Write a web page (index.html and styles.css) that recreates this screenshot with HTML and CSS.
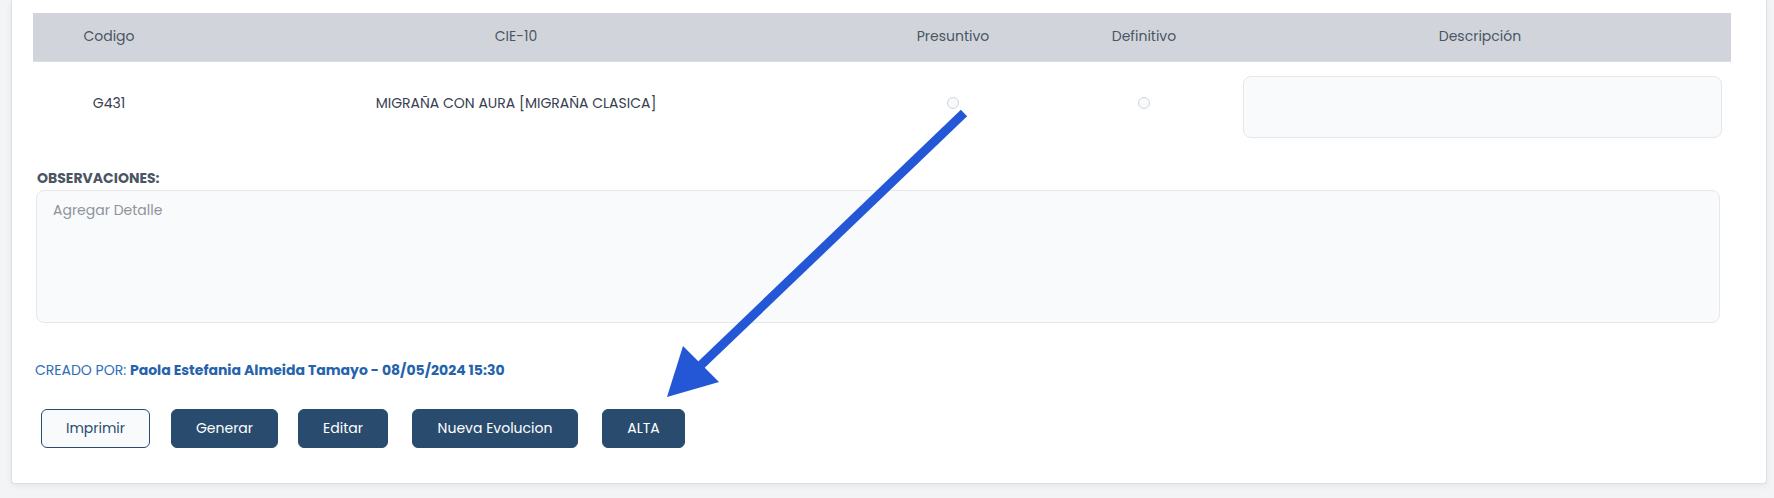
FILE: index.html
```html
<!DOCTYPE html>
<html lang="es">
<head>
<meta charset="utf-8">
<title>Diagnóstico</title>
<link rel="stylesheet" href="styles.css">
</head>
<body>
<div class="card">
  <div class="table">
    <div class="thead">
      <div class="th">Codigo</div>
      <div class="th">CIE-10</div>
      <div class="th">Presuntivo</div>
      <div class="th">Definitivo</div>
      <div class="th">Descripción</div>
    </div>
    <div class="trow">
      <div class="td">G431</div>
      <div class="td">MIGRAÑA CON AURA [MIGRAÑA CLASICA]</div>
      <div class="td"><input class="radio" type="radio" name="tipo"></div>
      <div class="td"><input class="radio" type="radio" name="tipo"></div>
      <div class="td desc-cell"><textarea class="desc"></textarea></div>
    </div>
  </div>

  <div class="obs">
    <div class="obs-label">OBSERVACIONES:</div>
    <textarea class="obs-box" placeholder="Agregar Detalle"></textarea>
  </div>

  <div class="created">CREADO POR: <strong>Paola Estefania Almeida Tamayo - 08/05/2024 15:30</strong></div>

  <div class="actions">
    <button class="btn btn-outline">Imprimir</button>
    <button class="btn btn-dark w-gen">Generar</button>
    <button class="btn btn-dark w-edit">Editar</button>
    <button class="btn btn-dark w-nueva">Nueva Evolucion</button>
    <button class="btn btn-dark w-alta">ALTA</button>
  </div>
</div>

<svg class="arrow" width="1774" height="498" viewBox="0 0 1774 498" aria-hidden="true">
  <line x1="964" y1="113" x2="700" y2="366" stroke="#2457d6" stroke-width="9" stroke-linecap="butt"/>
  <polygon points="667,397 683,346 719,382" fill="#2457d6"/>
</svg>
</body>
</html>
```

FILE: styles.css
```css
* { box-sizing: border-box; }

html, body {
  margin: 0;
  padding: 0;
}

body {
  background: #f3f4f6;
  font-family: "Poppins", "Inter", "Open Sans", sans-serif;
  color: #374151;
  width: 1774px;
  height: 498px;
  overflow: hidden;
  position: relative;
}

.card {
  margin-left: 11px;
  width: 1756px;
  height: 484px;
  background: #ffffff;
  border: 1px solid #dcdfe4;
  border-top: none;
  border-radius: 0 0 4px 4px;
  box-shadow: 0 2px 6px rgba(0, 0, 0, 0.06);
  padding: 13px 35px 0 21px;
}

.table {
  width: 1698px;
}

.thead,
.trow {
  display: grid;
  grid-template-columns: 152px 662px 212px 170px 502px;
}

.thead {
  height: 49px;
  background: #d1d5db;
  align-items: center;
  border-bottom: 1px solid #d9dde3;
}

.th {
  text-align: center;
  font-size: 14px;
  color: #4b5563;
  line-height: 18px;
  padding-bottom: 2px;
}

.trow {
  height: 84px;
  align-items: start;
}

.td {
  text-align: center;
  font-size: 14px;
  color: #374151;
  line-height: 18px;
  padding-top: 32px;
}

.radio {
  appearance: none;
  -webkit-appearance: none;
  width: 12px;
  height: 12px;
  margin: 3px 0 0 0;
  border: 1px solid #d1d5db;
  border-radius: 50%;
  background: #f9fafb;
  vertical-align: top;
}

.desc-cell {
  padding: 14px 9px 0 14px;
}

.desc {
  display: block;
  width: 479px;
  height: 62px;
  background: #f9fafb;
  border: 1px solid #e5e7eb;
  border-radius: 8px;
  resize: none;
  font-family: inherit;
}

.obs {
  margin-left: 3px;
  width: 1684px;
}

.obs-label {
  font-size: 14px;
  font-weight: 700;
  color: #4b5563;
  line-height: 18px;
  margin-top: 23px;
  margin-bottom: 3px;
  padding-left: 1px;
}

.obs-box {
  display: block;
  width: 1684px;
  height: 133px;
  background: #f9fafb;
  border: 1px solid #e5e7eb;
  border-radius: 8px;
  resize: none;
  padding: 10px 16px;
  font-family: inherit;
  font-size: 14px;
  line-height: 18px;
  color: #374151;
}

.obs-box::placeholder {
  color: #8f949c;
}

.created {
  margin-top: 38px;
  margin-left: 2px;
  font-size: 14px;
  line-height: 18px;
  color: #2f6db5;
}

.created strong {
  font-weight: 700;
  color: #2563ac;
}

.actions {
  display: flex;
  gap: 0;
  margin-top: 30px;
  margin-left: 8px;
}

.btn {
  height: 39px;
  border-radius: 6px;
  font-family: inherit;
  font-size: 14px;
  font-weight: 400;
  padding: 0;
  cursor: pointer;
}

.btn-outline {
  width: 109px;
  background: #f8fafc;
  border: 1px solid #294b6e;
  color: #294b6e;
}

.btn-dark {
  background: #294c6e;
  border: 1px solid #294c6e;
  color: #ffffff;
}

.w-gen { width: 107px; margin-left: 21px; }
.w-edit { width: 90px; margin-left: 20px; }
.w-nueva { width: 166px; margin-left: 24px; }
.w-alta { width: 83px; margin-left: 24px; }

.arrow {
  position: absolute;
  left: 0;
  top: 0;
  pointer-events: none;
}
```
